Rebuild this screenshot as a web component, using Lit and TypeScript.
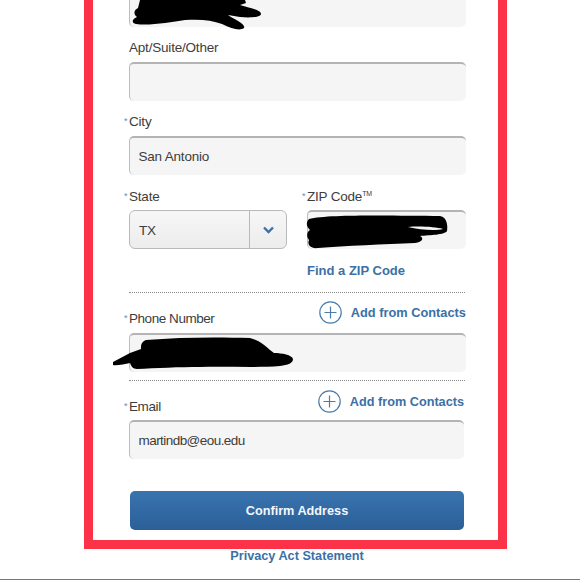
import { LitElement, html, css, svg } from "lit";
import { customElement } from "lit/decorators.js";

@customElement("app-root")
export class AppRoot extends LitElement {
  static styles = css`
    :host {
      display: block;
      position: relative;
      width: 580px;
      height: 580px;
      overflow: hidden;
      background: #fff;
      font-family: "Liberation Sans", Arial, sans-serif;
      color: #3d3d3d;
      font-size: 13.5px;
      letter-spacing: -0.2px;
    }
    .frame {
      box-sizing: border-box;
      width: 423px;
      height: 549px;
      margin-left: 84px;
      border: 9px solid #fb3248;
      border-top: none;
      padding: 0 32px 10px 36px;
      display: flex;
      flex-direction: column;
    }
    .label {
      height: 20px;
      line-height: 20px;
      white-space: nowrap;
    }
    .req .star {
      display: inline-block;
      width: 5px;
      margin-left: -5px;
      color: #5a8fbf;
      font-size: 9px;
      line-height: 0;
      vertical-align: 2px;
    }
    .sup { font-size: 7px; line-height: 0; vertical-align: 5px; }
    .input {
      box-sizing: border-box;
      height: 39px;
      flex: none;
      background: #f5f5f5;
      border-top: 2px solid #b4b4b4;
      border-left: 1.5px solid #bcbcbc;
      border-radius: 5px;
      padding-left: 8.5px;
      line-height: 37px;
      white-space: nowrap;
    }
    .street { height: 27px; border-top: none; border-radius: 0 0 5px 5px; }
    .l-apt { margin-top: 11px; margin-bottom: 4px; }
    .l-city { margin-top: 11px; margin-bottom: 4px; }
    .split {
      display: grid;
      grid-template-columns: 158px 159px;
      column-gap: 20px;
      margin-top: 11px;
    }
    .split .label { margin-top: 1px; margin-bottom: 3px; }
    .select {
      box-sizing: border-box;
      height: 39px;
      display: flex;
      border: 1px solid #b9b9b9;
      border-radius: 6px;
      background: linear-gradient(#f7f7f7, #ececec);
    }
    .select .val { flex: 1; padding-left: 9px; line-height: 39px; }
    .select .btn {
      width: 36px;
      border-left: 1px solid #b9b9b9;
      display: flex;
      align-items: center;
      justify-content: center;
    }
    .link {
      color: #3c70a6;
      font-weight: 700;
      font-size: 12.8px;
      letter-spacing: 0;
      line-height: 20px;
      white-space: nowrap;
    }
    .find { margin: 12px 0 0 178px; font-size: 13px; }
    .dots {
      height: 0;
      flex: none;
      border-top: 1px dotted #8a8a8a;
      margin-right: 1px;
    }
    .d1 { margin-top: 11px; }
    .d2 { margin-top: 8px; }
    .head {
      display: flex;
      justify-content: space-between;
      align-items: flex-start;
      flex: none;
    }
    .phone { height: 32px; padding-top: 8px; }
    .phone .label { margin-top: 8px; letter-spacing: -0.45px; }
    .email { height: 30px; padding-top: 9px; margin-right: 2px; }
    .email .label { margin-top: 7px; letter-spacing: -0.4px; }
    .email .link { font-size: 12.7px; }
    .add {
      display: flex;
      align-items: center;
      gap: 9px;
    }
    .add svg { display: block; }
    .mail-input { margin-right: 2px; letter-spacing: -0.55px; }
    .confirm {
      flex: none;
      height: 39px;
      margin: 32px 2px 0 1px;
      border-radius: 5px;
      background: linear-gradient(#3a74b0, #2b5f97);
      color: #f4f7fb;
      font-weight: 700;
      font-size: 12.7px;
      letter-spacing: 0;
      line-height: 40px;
      text-align: center;
    }
    .privacy {
      margin-left: 84px;
      width: 426px;
      text-align: center;
      color: #3c70a6;
      font-weight: 700;
      font-size: 12.7px;
      letter-spacing: 0;
      line-height: 14px;
    }
    .rule {
      position: absolute;
      left: 0;
      right: 0;
      bottom: 0;
      height: 1px;
      background: #777;
    }
    .scribble {
      position: absolute;
      left: 0;
      top: 0;
      width: 580px;
      height: 580px;
      pointer-events: none;
    }
  `;

  private plus() {
    return html`<svg width="23" height="23" viewBox="0 0 23 23" fill="none" stroke="#4a7cac" stroke-width="1.2">
      <circle cx="11.5" cy="11.5" r="10.7"></circle>
      <path d="M11.5 5.5v12M5.5 11.5h12"></path>
    </svg>`;
  }

  private scribbles() {
    return svg`
      <path fill="#000" d="M140 0 L245 0 L246 3 L240 5 C250 8 261 10 261 14 C261 17 252 18 240 17 L228 15 C235 20 246 24 244 28 C240 31 232 29 222 24 C212 20 200 19 185 20 C170 22 150 26 136 24 C131 23 132 19 137 17 C133 14 134 10 138 8 Z"></path>
      <path fill="#000" d="M309 219 C330 214 400 216 440 216 C447 217 448 226 447 231 C445 235 430 235 420 236 C424 238 423 242 415 243 C385 244 345 246 318 248 C310 249 307 244 309 240 C306 236 307 232 310 230 C306 226 306 222 309 219 Z"></path>
      <path fill="#f3f3f3" d="M408 227 C420 226 436 227 443 229 C436 231 420 230 408 227 Z"></path>
      <path fill="#000" d="M113 362 L130 353 L141 349 C141 345 141 342 146 340 C180 337 220 337 250 338 C258 340 265 345 270 350 L274 353 C282 353 292 355 293 359 C293 363 288 365 280 366 C255 368 225 366 200 367 C180 367 155 368 137 369 C133 369 131 366 130 363 C125 364 116 366 113 365 Z"></path>
    `;
  }

  render() {
    return html`
      <div class="frame">
        <div class="input street"></div>
        <div class="label l-apt">Apt/Suite/Other</div>
        <div class="input"></div>
        <div class="label req l-city"><span class="star">*</span>City</div>
        <div class="input">San Antonio</div>
        <div class="split">
          <div>
            <div class="label req"><span class="star">*</span>State</div>
            <div class="select">
              <div class="val">TX</div>
              <div class="btn">
                <svg width="11" height="8" viewBox="0 0 11 8" fill="none" stroke="#3c70a6" stroke-width="2.4">
                  <path d="M1 1.5l4.5 4.5 4.5-4.5"></path>
                </svg>
              </div>
            </div>
          </div>
          <div>
            <div class="label req"><span class="star">*</span>ZIP Code<span class="sup">TM</span></div>
            <div class="input"></div>
          </div>
        </div>
        <div class="link find">Find a ZIP Code</div>
        <div class="dots d1"></div>
        <div class="head phone">
          <div class="label req"><span class="star">*</span>Phone Number</div>
          <div class="add">${this.plus()}<span class="link">Add from Contacts</span></div>
        </div>
        <div class="input"></div>
        <div class="dots d2"></div>
        <div class="head email">
          <div class="label req"><span class="star">*</span>Email</div>
          <div class="add">${this.plus()}<span class="link">Add from Contacts</span></div>
        </div>
        <div class="input mail-input">martindb@eou.edu</div>
        <div class="confirm">Confirm Address</div>
      </div>
      <div class="privacy">Privacy Act Statement</div>
      <div class="rule"></div>
      <svg class="scribble" viewBox="0 0 580 580">${this.scribbles()}</svg>
    `;
  }
}
